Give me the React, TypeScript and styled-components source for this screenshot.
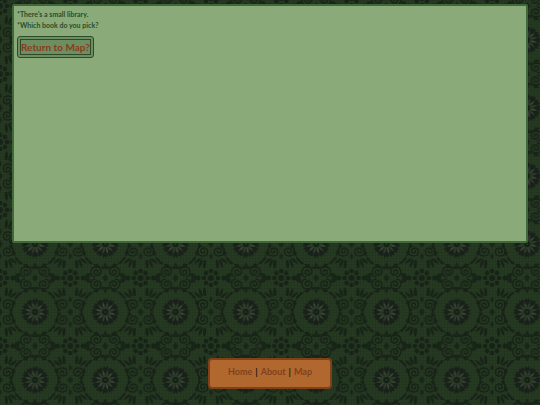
import React from "react";
import styled, { createGlobalStyle } from "styled-components";

const GlobalStyle = createGlobalStyle`
  *, *::before, *::after { box-sizing: border-box; }
  body {
    margin: 0;
    background: #203520;
    font-family: Lato, "Open Sans", sans-serif;
    font-weight: 700;
  }
`;

const Page = styled.div`
  position: relative;
  isolation: isolate;
  display: flex;
  flex-direction: column;
  align-items: center;
  justify-content: space-between;
  min-height: 100vh;
  padding: 4px 12px 16px;
`;

const Wallpaper = styled.svg`
  position: absolute;
  inset: 0;
  z-index: -1;
  width: 100%;
  height: 100%;
`;

const Scene = styled.main`
  align-self: stretch;
  min-height: 59vh;
  padding: 3px;
  border: 2px solid #41683a;
  border-radius: 2px;
  background: #8aaa7a;
`;

const Narration = styled.p`
  margin: 0 0 5px;
  color: #2c4b29;
  font-size: 7px;
  line-height: 11px;
`;

const ReturnButton = styled.button`
  display: block;
  height: 22px;
  padding: 0;
  border: 4px double #2c4b29;
  border-radius: 3px;
  background: #6c8e60;
  color: #8b3b1c;
  font: 700 10px/14px Lato, "Open Sans", sans-serif;
  cursor: pointer;
`;

const FooterNav = styled.nav`
  display: flex;
  align-items: center;
  gap: 3px;
  padding: 5px 18px 8px;
  border: 2px solid #804019;
  border-radius: 4px;
  background: #b0682f;
  color: #201a10;
  font-size: 9px;
  line-height: 14px;
`;

const NavLink = styled.a`
  color: #80401c;
  text-decoration: none;
`;

const petals = Array.from({ length: 12 }, (_, i) => i * 30);
const octants = Array.from({ length: 8 }, (_, i) => i * 45);

const Curl = () => (
  <path d="M-1 5C-7 5-7-5 0-5C6-5 6 3 1 3C-3 3-3-2 0-2C2-2 2 0 1 1" fill="none" stroke="#172216" strokeWidth="1.4" />
);

function CurlGroup({ dx, dy }: { dx: number; dy: number }) {
  return (
    <g>
      <g transform={`translate(${-dx} ${-dy})`}><Curl /></g>
      <g transform={`translate(${dx} ${-dy}) scale(-1 1)`}><Curl /></g>
      <g transform={`translate(${-dx} ${dy}) scale(1 -1)`}><Curl /></g>
      <g transform={`translate(${dx} ${dy}) scale(-1 -1)`}><Curl /></g>
      <path d="M0-4L3 0L0 4L-3 0Z M0-16L2-12L0-9L-2-12Z M0 16L2 12L0 9L-2 12Z" fill="#1a2619" />
    </g>
  );
}

const Rosette = () => (
  <g>
    {octants.map((a) => (
      <path
        key={a}
        transform={`rotate(${a + 22})`}
        d="M-10-22Q-7-26-4-23Q0-27 4-23Q7-26 10-22L8-21L3-23L0-21L-3-23L-8-21Z"
        fill="#182417"
      />
    ))}
    {petals.map((a) => (
      <path key={a} transform={`rotate(${a})`} d="M0-5L-3-11L-1-14L0-12L2-14L3-11Z" fill="#192119" />
    ))}
    {petals.map((a, i) => (
      <path
        key={a}
        transform={`rotate(${a + 15})`}
        d="M0-3L-1-7L0-10L1-7Z"
        fill={i % 2 ? "#3f463c" : "#323c2f"}
      />
    ))}
    <circle r="3" fill="#151f16" />
    <circle r="1" fill="#2a372b" />
  </g>
);

const Medallion = () => (
  <g fill="#182317">
    {octants.map((a) => (
      <circle key={a} transform={`rotate(${a})`} cy="-7" r="2.3" />
    ))}
    <circle r="3" />
    <path d="M-17 0L-12-3L-10 0L-12 3Z M17 0L12-3L10 0L12 3Z" />
    {[[1, 1], [-1, 1], [1, -1], [-1, -1]].map(([x, y]) => (
      <path
        key={`${x}${y}`}
        transform={`scale(${x} ${y})`}
        d="M5 18Q4 11 7 9Q9 13 7 18Z M8 18Q9 12 12 10Q13 15 9 19Z M10 19Q12 15 17 14Q15 19 10 20Z"
      />
    ))}
  </g>
);

function Damask() {
  return (
    <Wallpaper aria-hidden="true">
      <defs>
        <pattern id="weave" width="3" height="3" patternUnits="userSpaceOnUse">
          <path d="M0 0H3M0 0V3" stroke="#101b11" strokeWidth="1" opacity="0.25" />
        </pattern>
        <pattern id="damask" x="0" y="6" width="70.3" height="68" patternUnits="userSpaceOnUse">
          <rect width="71" height="68" fill="#263921" />
          <g transform="translate(35 34)"><Rosette /></g>
          {[0, 68].map((y) => (
            <g key={y} transform={`translate(35 ${y})`}>
              <CurlGroup dx={9} dy={6} />
              <path d="M-22 0Q-18-7-14-4L-16 0L-14 4Q-18 7-22 0M22 0Q18-7 14-4L16 0L14 4Q18 7 22 0" fill="#1a2519" />
            </g>
          ))}
          {[0, 70.3].map((x) => (
            <g key={x} transform={`translate(${x} 34)`}><CurlGroup dx={8} dy={7} /></g>
          ))}
          {[[0, 0], [70.3, 0], [0, 68], [70.3, 68]].map(([x, y]) => (
            <g key={`${x}-${y}`} transform={`translate(${x} ${y})`}><Medallion /></g>
          ))}
        </pattern>
      </defs>
      <rect width="100%" height="100%" fill="url(#damask)" />
      <rect width="100%" height="100%" fill="url(#weave)" />
    </Wallpaper>
  );
}

export default function App() {
  return (
    <>
      <GlobalStyle />
      <Page>
        <Damask />
        <Scene>
          <Narration>
            *There's a small library.
            <br />
            *Which book do you pick?
          </Narration>
          <ReturnButton type="button">Return to Map?</ReturnButton>
        </Scene>
        <FooterNav>
          <NavLink href="#home">Home</NavLink>
          <span>|</span>
          <NavLink href="#about">About</NavLink>
          <span>|</span>
          <NavLink href="#map">Map</NavLink>
        </FooterNav>
      </Page>
    </>
  );
}
